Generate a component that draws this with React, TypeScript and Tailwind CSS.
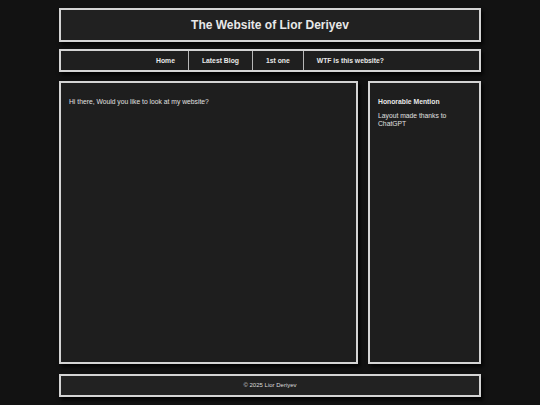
export default function App() {
  const links = ['Home', 'Latest Blog', '1st one', 'WTF is this website?'];

  return (
    <div className="min-h-screen bg-[#121212] font-['Liberation_Sans',Arial,sans-serif] text-[#e0e0e0]">
      <div className="mx-auto flex w-[422px] flex-col pt-[8px] pb-[8px]">
        {/* Header */}
        <header className="flex h-[34px] items-center justify-center border-2 border-[#d4d4d4] bg-[#212121] shadow-[2px_3px_4px_rgba(0,0,0,0.9)]">
          <h1 className="text-[12px] font-bold text-[#e8e8e8]">The Website of Lior Deriyev</h1>
        </header>

        {/* Nav */}
        <nav className="mt-[7px] flex h-[23px] justify-center border-2 border-[#d4d4d4] bg-[#1f1f1f] shadow-[2px_3px_4px_rgba(0,0,0,0.9)]">
          {links.map((l, i) => (
            <a
              key={l}
              className={
                'flex items-center px-[13px] pt-[1px] text-[6.8px] font-bold text-[#e8e8e8] ' +
                (i < links.length - 1 ? 'border-r border-[#b8b8b8]' : '')
              }
            >
              {l}
            </a>
          ))}
        </nav>

        {/* Content */}
        <div className="mt-[9px] flex h-[283px] gap-[10px]">
          <main className="flex-1 border-2 border-[#d4d4d4] bg-[#1e1e1e] px-[8px] pt-[14px] shadow-[2px_3px_4px_rgba(0,0,0,0.9)]">
            <p className="text-[6.75px] text-[#e0e0e0]">Hi there, Would you like to look at my website?</p>
          </main>
          <aside className="w-[113px] border-2 border-[#d4d4d4] bg-[#1e1e1e] px-[8px] pt-[14px] shadow-[2px_3px_4px_rgba(0,0,0,0.9)]">
            <h3 className="text-[6.8px] font-bold text-[#e8e8e8]">Honorable Mention</h3>
            <p className="mt-[5px] pr-[10px] text-[6.75px] leading-[8px] text-[#e0e0e0]">Layout made thanks to ChatGPT</p>
          </aside>
        </div>

        {/* Footer */}
        <footer className="mt-[10px] flex h-[23px] items-center justify-center border-2 border-[#d4d4d4] bg-[#222222] shadow-[2px_3px_4px_rgba(0,0,0,0.9)]">
          <p className="text-[6px] text-[#dcdcdc]">© 2025 Lior Deriyev</p>
        </footer>
      </div>
    </div>
  );
}
